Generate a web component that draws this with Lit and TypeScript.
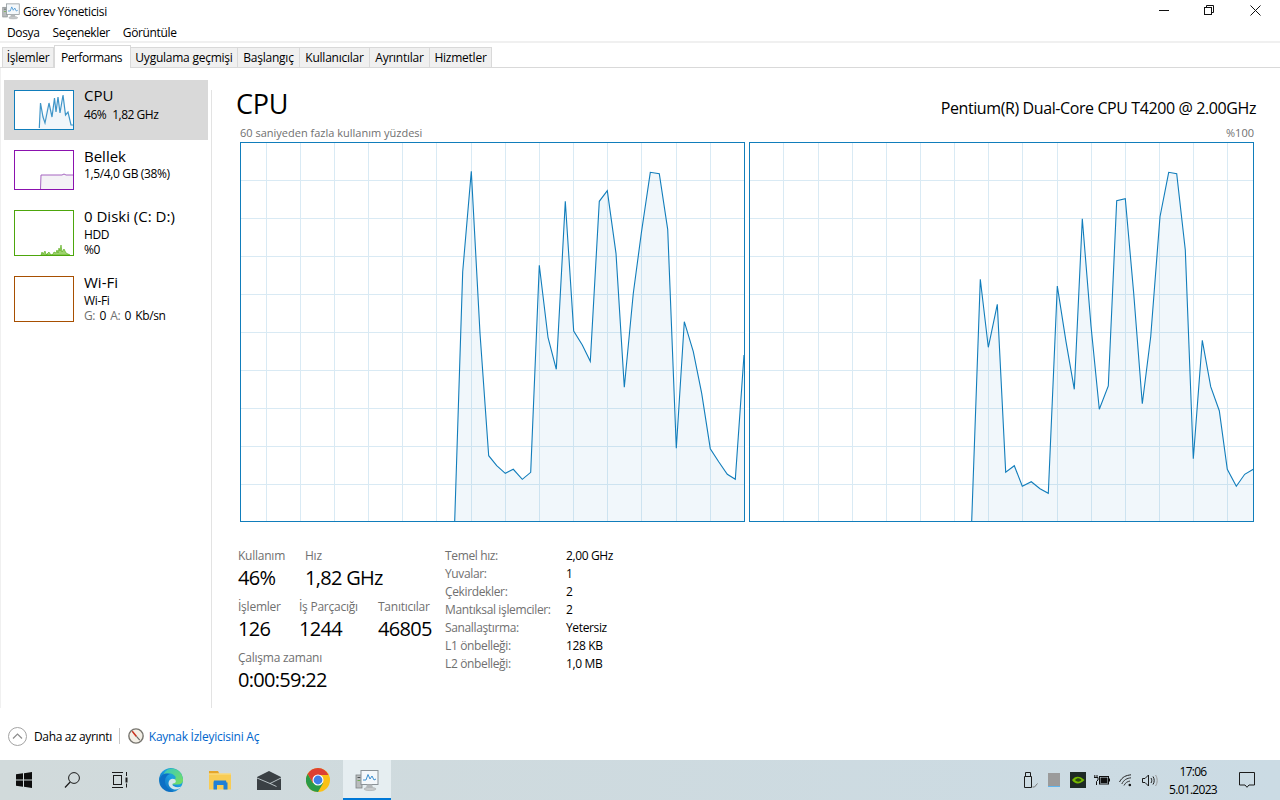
import { LitElement, html, css, svg } from "lit";
import { customElement } from "lit/decorators.js";

const CPU1 = "454.7,521 462.7,271.7 471.3,171.3 480,333.3 488.7,455.7 496.7,465.7 505.3,473.3 513.3,469.3 522.3,479.3 530.7,472.3 539.3,265.3 548,337.3 556.3,369.3 565.3,201.3 573.7,331 582.3,345 590.3,361.3 599.3,201.3 607.3,190.7 616,253.3 624.3,387.3 633.3,293.3 641.3,233.3 650.3,172.3 659.3,173.7 667.7,229.3 676.3,448.3 684.3,321.7 693.3,351.7 701.7,393.3 710.3,448.7 718.7,461.7 727.3,474.3 735.3,479.3 744,355";
const CPU2 = "971.7,521 980.3,279.3 988.3,347.3 997.3,304.3 1005.7,472.3 1014.3,465.7 1022.3,486.3 1031.3,481.7 1040,488.7 1048.3,493.3 1057.3,286 1066,341.7 1074.3,389.3 1082.3,218.7 1091,326 1099.3,409.3 1108.3,386 1116.7,200.7 1125.3,198.7 1133.7,293.3 1142.3,403.7 1150.7,336.7 1160,216.7 1168.7,172.3 1176.7,173.7 1185.3,250 1193.3,458.7 1202.3,340.3 1210.7,386.7 1219.3,410.7 1227.3,469.3 1236.3,486.3 1244.7,474.3 1253.3,469.3";
const H = [180, 218, 256, 294, 332, 370, 408, 446, 484];
const V1 = [266, 300, 334, 368, 402, 436, 471, 505, 539, 573, 607, 641, 676, 710];
const V2 = [783, 818, 852, 886, 920, 954, 988, 1022, 1057, 1091, 1125, 1159, 1193, 1227];

function chart(x: number, pts: string, vs: number[], lastX: number) {
  const fill = `${pts.split(" ")[0].split(",")[0]},521 ${pts} ${lastX},521`;
  return html`<svg class="chart" viewBox="${x} 142 505 380" width="505" height="380">
    ${H.map((y) => svg`<line x1=${x} x2=${x + 505} y1=${y + 0.5} y2=${y + 0.5} stroke="#d9eaf4"/>`)}
    ${vs.map((v) => svg`<line x1=${v + 0.5} x2=${v + 0.5} y1="142" y2="522" stroke="#d9eaf4"/>`)}
    <polygon points=${fill} fill="rgba(17,125,187,0.06)"/>
    <polyline points=${pts} fill="none" stroke="#117dbb" stroke-width="1.1"/>
    <rect x=${x + 0.5} y="142.5" width="504" height="379" fill="none" stroke="#117dbb"/>
  </svg>`;
}

const tmIcon = (s: number) => html`<svg width=${s} height=${s} viewBox="0 0 24 24">
  <rect x="1" y="7" width="6" height="13" fill="#b9bcbd" stroke="#7d8386" stroke-width=".8"/>
  <rect x="2.5" y="9" width="3" height="1" fill="#4f5557"/><rect x="2.5" y="12" width="3" height="1" fill="#6fae4f"/>
  <rect x="6" y="2.5" width="17" height="14" fill="#f4f8fb" stroke="#8a9297"/>
  <polyline points="8,12 11,12 13,6.5 15,11 17,8 19,12 21,11" fill="none" stroke="#3c8fd0" stroke-width="1"/>
  <path d="M12 16.5h5l1 3h-7z" fill="#b3b7b9"/><ellipse cx="15" cy="21" rx="6" ry="1.6" fill="#c7cacb" stroke="#989c9e" stroke-width=".5"/>
</svg>`;

const icons = {
  win: html`<svg width="16" height="16" viewBox="0 0 16 16" fill="#0d0d0d"><path d="M0 2.3 7 1.3V7.5H0zM8 1.2 16 0V7.5H8zM0 8.5H7V14.7L0 13.7zM8 8.5H16V16L8 14.8z"/></svg>`,
  search: html`<svg width="16" height="16" viewBox="0 0 16 16" fill="none" stroke="#1a1a1a" stroke-width="1"><circle cx="10" cy="6" r="5.4"/><path d="M6.2 10 1 15.5" stroke-width="1.2"/></svg>`,
  task: html`<svg width="16" height="16" viewBox="0 0 16 16" fill="none" stroke="#1a1a1a"><path d="M0 .5h11M0 15.5h11"/><rect x="1.5" y="3.5" width="8" height="9"/><path d="M14.5 0v4M14.5 11.500v4"/><path d="M14.500 5.500v5" stroke-width="2"/></svg>`,
  edge: html`<svg width="24" height="24" viewBox="0 0 24 24">
    <defs><linearGradient id="eg" x1="0" y1="1" x2="1" y2="0"><stop offset="0" stop-color="#0a5fb0"/><stop offset=".55" stop-color="#1b9de2"/><stop offset="1" stop-color="#35c1a0"/></linearGradient>
    <linearGradient id="eh" x1="0" y1="0" x2="1" y2="1"><stop offset="0" stop-color="#38c8c0"/><stop offset="1" stop-color="#7be05a"/></linearGradient></defs>
    <circle cx="12" cy="12" r="12" fill="url(#eg)"/>
    <path d="M9 1.500C15 -1 23 2 24 11.500 24.300 15.500 21 17 17.500 16.500H10.500C10 13 13 11 15.500 11 17 11 17 9 16 8 13.500 5 9.500 4 4.500 7 5 4.500 7 2.500 9 1.500z" fill="url(#eh)"/>
    <path d="M9.500 15C9.500 19 13 21.500 16.500 21.500 19.500 21.500 21.500 20 22.500 18.500 20 19.500 17 19.500 14.500 18 13 17 13 15.500 15 15.300 17 15 17.500 13 16 11.500 13.500 10 10 11 9.500 15z" fill="#d4e6ea"/>
    <path d="M1 11C2 6 7 4.500 11 6 7.500 7 5.500 10.500 6 14.500 6.500 18.500 10 22 14.500 23.500 7 25 .5 18.500 1 11z" fill="#0c6fc5"/>
  </svg>`,
  folder: html`<svg width="22" height="19" viewBox="0 0 22 19">
    <path d="M0 0h9l1.500 3H0z" fill="#e5a52a"/><rect y="2.500" width="22" height="16" fill="#f8cc55"/><rect y="2.500" width="22" height="1" fill="#fbe08c"/>
    <path d="M4.500 11.500 5 9.500H17L17.500 11.500H18.500V18.500H14.500V14H8V18.500H4.500z" fill="#1f80d6"/>
  </svg>`,
  mail: html`<svg width="24" height="19" viewBox="0 0 24 19"><path d="M0 6 12 0 24 6V19H0z" fill="#3a4044"/><path d="M0 7 13 12.500 24 7M13 12.500 19.500 15.500" fill="none" stroke="#d8e2e6" stroke-width=".8"/></svg>`,
  chrome: html`<svg width="24" height="24" viewBox="0 0 24 24">
    <circle cx="12" cy="12" r="12" fill="#fbc116"/>
    <path d="M12 0A12 12 0 0 0 1.600 6l5.200 9L12 7H22.400A12 12 0 0 0 12 0z" fill="#dd4033"/>
    <path d="M1.600 6A12 12 0 0 0 12 24l5.200-9-10.400 0z" fill="#2a9a48"/>
    <circle cx="12" cy="12" r="5.500" fill="#fff"/><circle cx="12" cy="12" r="4.400" fill="#3f7fe8"/>
  </svg>`,
  usb: html`<svg width="16" height="16" viewBox="0 0 16 16" fill="none" stroke="#1c1c1c"><path d="M3.500 .5h5v4h-5z"/><path d="M2.500 4.500h7v11h-7z"/><path d="M10.500 15 12.500 15 15.500 11.500" stroke="#777"/></svg>`,
  square: html`<svg width="12" height="14" viewBox="0 0 12 14"><rect width="12" height="13" fill="#9b9b9b"/><rect y="13" width="12" height="1" fill="#5fb5ef"/></svg>`,
  nvidia: html`<svg width="16" height="16" viewBox="0 0 16 16"><rect width="16" height="16" fill="#1e2a25"/><path d="M2 8C5 3.500 10 3.500 14.500 8 10 12.500 5 12.500 2 8z" fill="#76b900"/><path d="M5 8C7 5.800 9.500 5.800 11.500 8 9.500 10.200 7 10.200 5 8z" fill="#2c4a12"/></svg>`,
  battery: html`<svg width="16" height="10" viewBox="0 0 16 10"><path d="M3 0v2.500M.8 0v2.500M0 2.500h4V5L2.500 6.500V10" fill="none" stroke="#111"/><rect x="5.500" y="1.500" width="9" height="7.500" fill="none" stroke="#111"/><rect x="6.500" y="2.500" width="7" height="5.500" fill="#111"/><rect x="15" y="3.500" width="1" height="3" fill="#111"/></svg>`,
  wifi: html`<svg width="14" height="13" viewBox="0 0 14 13" fill="none" stroke="#222"><path d="M.5 8C3.500 2.500 7 1.500 12 .8"/><path d="M2.800 10C5 5.500 8 4.300 12 3.800" stroke="#333"/><path d="M5 11.500C6.500 8.500 8.500 7.500 11 7" stroke="#333"/><circle cx="10.800" cy="11" r="1.300" fill="#111" stroke="none"/></svg>`,
  speaker: html`<svg width="16" height="13" viewBox="0 0 16 13" fill="none" stroke="#1c1c1c"><path d="M.5 4.500h2.500L6.500 1v11L3 8.500H.5z"/><path d="M9 4c1 1.500 1 3.500 0 5M11 2.500c1.600 2.500 1.600 5.500 0 8"/><path d="M13.500 1c2.200 3 2.200 8 0 11" stroke="#999"/></svg>`,
  note: html`<svg width="16" height="16" viewBox="0 0 16 16" fill="none" stroke="#1c1c1c"><path d="M.5 .5h15v12.500H10L8 15.300 6 13H.5z"/></svg>`,
  chevron: html`<svg width="19" height="19" viewBox="0 0 19 19" fill="none" stroke="#a3a3a3"><circle cx="9.500" cy="9.500" r="9"/><path d="M5 11.500 9.500 7 14 11.500" stroke="#8d8d8d" stroke-width="1.200"/></svg>`,
  monitor: html`<svg width="16" height="16" viewBox="0 0 17 17"><circle cx="8.500" cy="8.500" r="7.600" fill="#f3efe6" stroke="#77756f" stroke-width="1.500"/><path d="M4.500 3.500 9 9" stroke="#c8301e" stroke-width="1.600"/><path d="M9 9 12.500 13" stroke="#666" stroke-width="1.200"/></svg>`,
  min: html`<svg width="10" height="10" viewBox="0 0 10 10"><path d="M0 5.500h10" stroke="#111"/></svg>`,
  max: html`<svg width="10" height="10" viewBox="0 0 10 10" fill="none" stroke="#111"><rect x=".5" y="2.500" width="7" height="7"/><path d="M2.500 2.500V.5h7v7h-2"/></svg>`,
  close: html`<svg width="11" height="11" viewBox="0 0 11 11" stroke="#111"><path d="M.5 .5 10.500 10.500M10.500 .5 .5 10.500"/></svg>`,
};

const thumbs = {
  cpu: html`<svg width="58" height="38" viewBox="1 1 58 38"><polygon points="25.300,38 26.500,13 29,27 35,13 38,27 40.500,8 42,22 44,7 46,23 49,5 51.500,25 54,22 57,35 59,35 59,39 25.300,39" fill="#f1f6fa"/><polyline points="25.300,38 26.500,13 29,27 31,33 35,13 38,27 40.500,8 42,22 44,7 46,23 49,5 51.500,25 54,22 57,35 59,35" fill="none" stroke="#3f95c8" stroke-width="1.200"/></svg>`,
  mem: html`<svg width="58" height="38" viewBox="1 1 58 38"><polygon points="26.500,39 27,25 48,25 50,24 52,25 59,25 59,39" fill="#f4f2f6" stroke="none"/><polyline points="26.500,39 27,25 48,25 50,24 52,25 59,25" fill="none" stroke="#a565c0"/></svg>`,
  disk: html`<svg width="58" height="44" viewBox="1 1 58 44"><polygon points="27,45 28,42 29,44 31,41 32,44 33,45 33,44 35,42 36,44 38,45 39,44 40,42 42,43 43,40 44,43 45,38 46,41 47,35 48,42 50,39 52,43 54,44 56,45" fill="#9ed36e" stroke="#4da60c" stroke-width=".6"/></svg>`,
};

@customElement("app-root")
export class AppRoot extends LitElement {
  static styles = css`
    :host { display: flex; flex-direction: column; width: 1280px; height: 800px; background: #fff; overflow: hidden;
      font-family: "Open Sans", "Noto Sans", sans-serif; font-size: 12px; letter-spacing: -0.03em; color: #000; }
    svg { display: block; flex: none; }
    .title { height: 22px; box-sizing: border-box; padding: 1px 0 1px 2px; display: flex; align-items: center; flex: none; }
    .title .tm { width: 21px; }
    .ctrls { margin-left: auto; display: flex; align-items: center; margin-bottom: 2px; }
    .ctrl { width: 46px; box-sizing: border-box; display: flex; justify-content: center; }
    .ctrls .ctrl:first-child { padding-left: 2px; }
    .ctrls .ctrl:last-child { margin-left: 2px; padding-right: 3px; }
    .menu { height: 21px; box-sizing: border-box; padding: 2px 0 0 7px; display: flex; align-items: center; flex: none; border-bottom: 2px solid #f0f0f0; gap: 13px; }
    .tabs { height: 23px; margin-top: 1px; display: flex; align-items: flex-end; padding-left: 2px; border-bottom: 1px solid #d9d9d9; flex: none; letter-spacing: -0.02em; }
    .tab { height: 20px; box-sizing: border-box; background: #f0f0f0; border: 1px solid #d9d9d9; border-bottom: none; border-left: none; display: flex; align-items: center; justify-content: center; }
    .tab:first-child { border-left: 1px solid #d9d9d9; }
    .tab.on { height: 23px; background: #fff; margin-bottom: -1px; border-left: 1px solid #d9d9d9; letter-spacing: -0.04em; padding-right: 2px; }
    .body { flex: 1; display: flex; min-height: 0; border-left: 1px solid #f0f0f0; }
    .side { width: 210px; padding-top: 12px; flex: none; }
    .item { margin-left: 3px; width: 204px; display: flex; gap: 10px; padding: 10px 0 10px 10px; box-sizing: border-box; }
    .item.on { background: #d9d9d9; }
    .thumb { width: 60px; box-sizing: border-box; border: 1px solid; flex: none; background: #fff; }
    .thumb.c { height: 40px; border-color: #117dbb; }
    .thumb.m { height: 40px; border-color: #8b12ae; }
    .thumb.d { height: 46px; border-color: #4da60c; }
    .thumb.w { height: 46px; border-color: #a74f01; }
    .name { font-size: 15px; line-height: 16px; margin-top: -2px; height: 18px; letter-spacing: 0; }
    .name.first { margin-top: -3px; height: 20px; }
    .name.tall { height: 19px; }
    .sub { line-height: 15px; }
    .sub:last-child { margin-bottom: -4px; }
    .sub.g { display: flex; gap: 6px; letter-spacing: -0.04em; }
    .sub.net { word-spacing: 1.5px; }
    .muted { color: #707070; }
    .div { width: 1px; background: #e3e3e3; margin-top: 22px; flex: none; }
    .main { flex: 1; padding: 16px 26px 0 24px; min-width: 0; }
    .head { display: flex; justify-content: space-between; height: 40px; }
    .head h1 { margin: 0; font-weight: 400; font-size: 27px; line-height: 40px; letter-spacing: -0.01em; }
    .head .model { font-size: 16px; line-height: 20px; margin: 14px -2px 0 0; letter-spacing: -0.025em; }
    .cap { display: flex; justify-content: space-between; height: 18px; line-height: 18px; font-size: 11px; color: #707070; padding-left: 4px; box-sizing: border-box; letter-spacing: 0; }
    .charts { display: flex; gap: 4px; margin-left: 4px; height: 380px; width: 1014px; }
    .stats { display: flex; margin: 25px 0 0 2px; }
    .left { width: 207px; flex: none; display: flex; flex-direction: column; gap: 5px; }
    .row { display: flex; }
    .lab { line-height: 18px; color: #707070; letter-spacing: -0.02em; }
    .val { font-size: 20px; line-height: 30px; margin-top: -2px; height: 30px; letter-spacing: -0.035em; }
    .w67 { width: 67px; } .w61 { width: 61px; } .w79 { width: 79px; }
    .table { display: grid; grid-template-columns: 121px auto; grid-auto-rows: 18px; line-height: 18px; }
    .foot { height: 52px; flex: none; display: flex; align-items: center; padding: 4px 0 0 8px; box-sizing: border-box; }
    .foot .less { margin-left: 7px; }
    .foot .sep { width: 1px; height: 16px; background: #c8c8c8; margin: 0 8px 0 7px; }
    .foot a { color: #0066cc; margin-left: 5px; text-decoration: none; letter-spacing: -0.02em; }
    .bar { height: 40px; flex: none; display: flex; align-items: center; background: linear-gradient(90deg, #d1dadb, #cbdbe4); }
    .tb { width: 48px; height: 40px; display: flex; align-items: center; justify-content: center; flex: none; box-sizing: border-box; }
    .apps { display: flex; margin-left: 3px; }
    .apps .tb { width: 49px; padding-right: 1px; }
    .apps .tb.on { background: #e6eef1; border-bottom: 2px solid #0078d7; width: 48px; padding: 2px 0 0; }
    .tray { margin-left: auto; display: flex; align-items: center; }
    .slot { width: 24px; display: flex; justify-content: center; }
    .clock { width: 62px; margin-right: 2px; text-align: center; line-height: 18px; padding-top: 2px; letter-spacing: -0.06em; }
    .noti { width: 42px; display: flex; justify-content: center; margin-right: 12px; }
  `;

  render() {
    const tabs: [string, number, boolean?][] = [["İşlemler", 52], ["Performans", 77, true], ["Uygulama geçmişi", 107], ["Başlangıç", 62], ["Kullanıcılar", 70], ["Ayrıntılar", 60], ["Hizmetler", 62]];
    const specs = [["Temel hız:", "2,00 GHz"], ["Yuvalar:", "1"], ["Çekirdekler:", "2"], ["Mantıksal işlemciler:", "2"], ["Sanallaştırma:", "Yetersiz"], ["L1 önbelleği:", "128 KB"], ["L2 önbelleği:", "1,0 MB"]];
    return html`
      <div class="title"><div class="tm">${tmIcon(18)}</div><span>Görev Yöneticisi</span>
        <div class="ctrls"><div class="ctrl">${icons.min}</div><div class="ctrl">${icons.max}</div><div class="ctrl">${icons.close}</div></div></div>
      <div class="menu"><span>Dosya</span><span>Seçenekler</span><span>Görüntüle</span></div>
      <div class="tabs">${tabs.map(([t, w, on]) => html`<div class="tab ${on ? "on" : ""}" style="width:${w}px">${t}</div>`)}</div>
      <div class="body">
        <div class="side">
          <div class="item on"><div class="thumb c">${thumbs.cpu}</div><div><div class="name first">CPU</div><div class="sub g"><span>46%</span><span>1,82 GHz</span></div></div></div>
          <div class="item"><div class="thumb m">${thumbs.mem}</div><div><div class="name">Bellek</div><div class="sub">1,5/4,0 GB (38%)</div></div></div>
          <div class="item"><div class="thumb d">${thumbs.disk}</div><div><div class="name tall">0 Diski (C: D:)</div><div class="sub">HDD</div><div class="sub">%0</div></div></div>
          <div class="item"><div class="thumb w"></div><div><div class="name tall">Wi-Fi</div><div class="sub">Wi-Fi</div><div class="sub net"><span class="muted">G:</span> 0 <span class="muted">A:</span> 0 Kb/sn</div></div></div>
        </div>
        <div class="div"></div>
        <div class="main">
          <div class="head"><h1>CPU</h1><div class="model">Pentium(R) Dual-Core CPU T4200 @ 2.00GHz</div></div>
          <div class="cap"><span>60 saniyeden fazla kullanım yüzdesi</span><span>%100</span></div>
          <div class="charts">${chart(240, CPU1, V1, 744)}${chart(749, CPU2, V2, 1253.3)}</div>
          <div class="stats">
            <div class="left">
              <div class="row"><div class="w67"><div class="lab">Kullanım</div><div class="val">46%</div></div><div><div class="lab">Hız</div><div class="val">1,82 GHz</div></div></div>
              <div class="row"><div class="w61"><div class="lab">İşlemler</div><div class="val">126</div></div><div class="w79"><div class="lab">İş Parçacığı</div><div class="val">1244</div></div><div><div class="lab">Tanıtıcılar</div><div class="val">46805</div></div></div>
              <div class="row"><div><div class="lab">Çalışma zamanı</div><div class="val">0:00:59:22</div></div></div>
            </div>
            <div class="table">${specs.map(([a, b]) => html`<div class="muted">${a}</div><div>${b}</div>`)}</div>
          </div>
        </div>
      </div>
      <div class="foot">${icons.chevron}<span class="less">Daha az ayrıntı</span><div class="sep"></div>${icons.monitor}<a>Kaynak İzleyicisini Aç</a></div>
      <div class="bar">
        <div class="tb">${icons.win}</div><div class="tb">${icons.search}</div><div class="tb">${icons.task}</div>
        <div class="apps"><div class="tb">${icons.edge}</div><div class="tb">${icons.folder}</div><div class="tb">${icons.mail}</div><div class="tb">${icons.chrome}</div><div class="tb on">${tmIcon(24)}</div></div>
        <div class="tray">
          <div class="slot">${icons.usb}</div><div class="slot">${icons.square}</div><div class="slot">${icons.nvidia}</div><div class="slot">${icons.battery}</div><div class="slot">${icons.wifi}</div><div class="slot">${icons.speaker}</div>
          <div class="clock">17:06<br />5.01.2023</div><div class="noti">${icons.note}</div>
        </div>
      </div>
    `;
  }
}
